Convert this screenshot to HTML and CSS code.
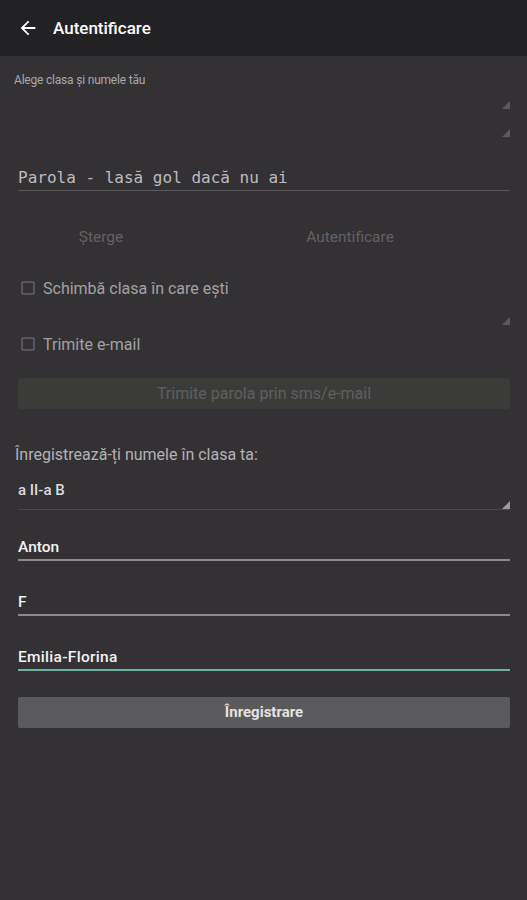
FILE: index.html
```html
<!DOCTYPE html>
<html lang="ro">
<head>
<meta charset="utf-8">
<title>Autentificare</title>
<link rel="stylesheet" href="styles.css">
</head>
<body>
<header class="appbar">
  <svg class="back" width="22" height="22" viewBox="0 0 24 24"><path d="M20 11H7.83l5.59-5.59L12 4l-8 8 8 8 1.41-1.41L7.83 13H20v-2z" fill="#ffffff"/></svg>
  <span class="title">Autentificare</span>
</header>
<main class="content">
  <div class="hint">Alege clasa și numele tău</div>
  <div class="spin spin1"><span class="tri dim"></span></div>
  <div class="spin spin2"><span class="tri dim"></span></div>
  <div class="pwd">Parola - lasă gol dacă nu ai</div>
  <div class="btnrow">
    <span class="flat">Șterge</span>
    <span class="flat right">Autentificare</span>
  </div>
  <label class="check check1"><span class="box"></span><span>Schimbă clasa în care ești</span></label>
  <div class="spin spin3"><span class="tri dim"></span></div>
  <label class="check check2"><span class="box"></span><span>Trimite e-mail</span></label>
  <div class="btn disabled">Trimite parola prin sms/e-mail</div>
  <div class="section">Înregistrează-ți numele în clasa ta:</div>
  <div class="select"><span>a II-a B</span><span class="tri"></span></div>
  <div class="field f1">Anton</div>
  <div class="field f2">F</div>
  <div class="field f3 focused">Emilia-Florina</div>
  <div class="btn primary">Înregistrare</div>
</main>
</body>
</html>
```
FILE: styles.css
```css
html, body {
  margin: 0;
  padding: 0;
  background: #333134;
  font-family: Roboto, "Noto Sans", sans-serif;
  height: 100%;
}
.appbar {
  height: 56px;
  background: #222124;
  display: flex;
  align-items: center;
  padding-left: 17px;
  box-sizing: border-box;
}
.back { display: block; }
.title {
  margin-left: 14px;
  color: #ffffff;
  font-size: 17px;
  font-weight: 500;
}
.content {
  display: flex;
  flex-direction: column;
  padding: 0 17px 0 18px;
}
.hint {
  margin-top: 14px;
  margin-left: -4px;
  height: 20px;
  line-height: 20px;
  font-size: 12px;
  letter-spacing: -0.2px;
  color: #a9a8aa;
}
.spin {
  display: flex;
  justify-content: flex-end;
  align-items: flex-end;
  padding-bottom: 1px;
  box-sizing: border-box;
}
.spin1 { height: 20px; }
.spin2 { height: 28px; }
.spin3 { height: 24px; }
.tri {
  width: 8px;
  height: 8px;
  background: #9a999b;
  clip-path: polygon(100% 0, 100% 100%, 0 100%);
}
.tri.dim { background: #5a595b; }
.pwd {
  margin-top: 28px;
  height: 24px;
  line-height: 24px;
  font-family: "DejaVu Sans Mono", "Liberation Mono", monospace;
  font-size: 16px;
  color: #bdbcbe;
  border-bottom: 1px solid #59585a;
}
.btnrow {
  margin-top: 28px;
  height: 36px;
  display: grid;
  grid-template-columns: 166px 1fr;
  align-items: center;
  font-size: 15.5px;
  color: #626163;
}
.flat { text-align: center; }
.flat.right { padding-left: 6px; }
.check {
  display: flex;
  align-items: center;
  height: 28px;
  font-size: 16px;
  color: #a2a1a3;
}
.check1 { margin-top: 19px; }
.check2 { margin-top: 4px; }
.box {
  width: 14px;
  height: 14px;
  box-sizing: border-box;
  border: 2px solid #58575a;
  border-radius: 2px;
  margin-left: 3px;
  margin-right: 8px;
}
.btn {
  height: 31px;
  line-height: 31px;
  text-align: center;
  border-radius: 2px;
}
.btn.disabled {
  margin-top: 20px;
  background: #3b3c3a;
  color: #5f5f5f;
  font-size: 16px;
}
.section {
  margin-top: 36px;
  margin-left: -3px;
  height: 20px;
  line-height: 20px;
  font-size: 16px;
  color: #b3b2b4;
}
.select {
  margin-top: 12px;
  height: 32px;
  display: flex;
  justify-content: space-between;
  align-items: flex-start;
  border-bottom: 1px solid #48474a;
}
.select span:first-child {
  line-height: 26px;
  font-size: 15px;
  font-weight: 500;
  color: #dcdbdd;
}
.select .tri {
  align-self: flex-end;
}
.field {
  height: 24px;
  line-height: 24px;
  font-size: 15.5px;
  font-weight: 500;
  color: #f2f2f2;
  border-bottom: 2px solid #8a898b;
}
.f1 { margin-top: 25px; }
.f2 { margin-top: 29px; }
.f3 { margin-top: 29px; letter-spacing: 0.3px; }
.field.focused { border-bottom-color: #6cb5a2; }
.btn.primary {
  margin-top: 26px;
  background: #5a595b;
  color: #e2e2e2;
  font-weight: 700;
  font-size: 15px;
}
```
